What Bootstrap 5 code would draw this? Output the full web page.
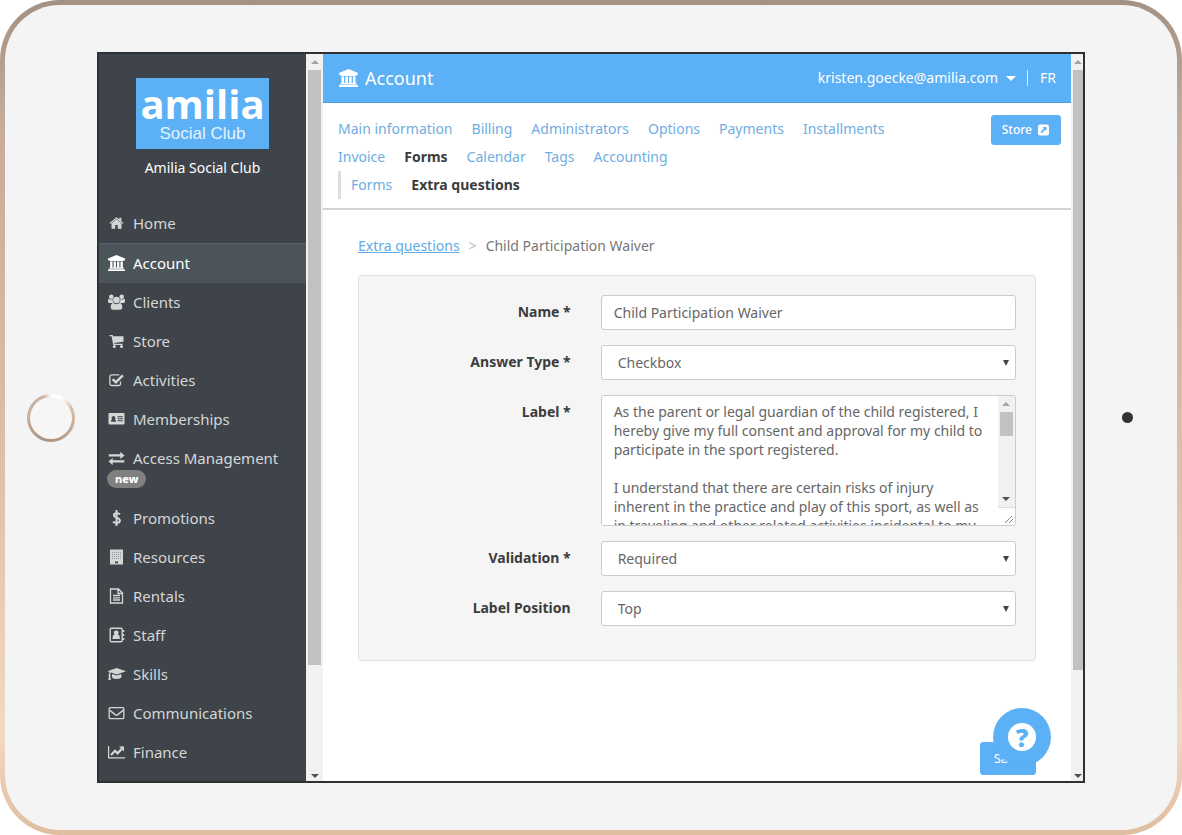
<!DOCTYPE html>
<html lang="en">
<head>
<meta charset="utf-8">
<meta name="viewport" content="width=device-width, initial-scale=1">
<title>Account - Extra questions</title>
<link href="https://cdn.jsdelivr.net/npm/bootstrap@5.3.0/dist/css/bootstrap.min.css" rel="stylesheet">
<style>
:root{--brand:#5cb0f5;--side:#3e444a;--ink:#3c3c3c}
body{font-family:"Noto Sans",sans-serif;font-size:14px;line-height:20px;color:#666;background:#fff}
.tablet{min-height:600px;border:5px solid transparent;border-radius:60px;
  background:linear-gradient(#f4f4f4,#f4f4f4) padding-box,linear-gradient(180deg,#a39183,#c6ad9a 15%,#dcc0a8 55%,#f1d9c2 88%,#dfbd9f) border-box;padding:47px 0}
.bezel{flex:0 0 92px}
.home-ring{width:48px;height:48px;border-radius:50%;border:3px solid transparent;
  background:linear-gradient(#f6f6f6,#f6f6f6) padding-box,conic-gradient(#fff 0,#fff 8%,#d8bda6 18%,#b39a86 45%,#a8917f 55%,#c9ae98 75%,#cdb5a3 95%,#fff) border-box}
.camera{width:11px;height:11px;border-radius:50%;background:#333}
.screen{border:2px solid #2e3133;background:#fff;min-width:0}
.sidebar{flex:0 0 207px;background:var(--side)}
.club-logo{width:133px;height:71px;background:var(--brand);color:#fff;text-decoration:none}
.club-logo strong{font-family:"Open Sans",sans-serif;font-weight:700;font-size:40px;line-height:52px}
.club-logo span{font-family:"Liberation Sans",sans-serif;font-size:17px;line-height:20px;color:#e4f3ff;margin-top:-6px}
.club-name{margin:9px 0 26px}
.side-nav .nav-link{font-size:15px;line-height:20px;color:#d6d6d6;padding:9px 8px 10px;display:flex;flex-wrap:wrap;align-items:center;column-gap:7px}
.side-nav .nav-link.active{color:#fff;background:#4b5459;border-top:1px solid #56606c}
.side-nav .ico{width:19px;height:18px;fill:currentColor}
.ico{flex:none}
.tag-new{background:#808080;font-size:11px;line-height:18px;padding:0 8px;font-weight:800}
.side-nav .has-tag{row-gap:2px;padding-bottom:11px}
.bar-track{flex:none;width:17px;background:#f1f1f1;padding:0 2px;overflow:hidden}
.bar-edge{width:12px;padding-right:0}
.bar-track i{flex:none;display:block;height:16px}
.bar-track i::after{content:"";display:block;margin:6px auto 0;width:0;border:4px solid transparent;border-top-width:0;border-bottom-color:#a3a3a3}
.bar-track i.down::after{border-top:4px solid #505050;border-bottom:0}
.screen > .bar-track i.down{height:13px}
.bar-track b{display:block;background:#c1c1c1}
.bar-track .grow-thumb{flex:0 1 595px}
.bar-edge .grow-thumb{flex-basis:600px}
.main-pane{min-width:0}
.top-bar{background:var(--brand);border-bottom:1px solid #4e9fe2;padding:0 15px;height:49px;color:#fff}
.top-bar h1{font-size:18px;line-height:24px;font-weight:400;margin:0;column-gap:6px}
.top-bar .user-menu{color:#fff;background:none;border:0;padding:0;font-size:14px}
.user-menu::after{margin-left:8px;vertical-align:2px;border-width:5px;border-bottom-width:0}
.lang{color:#fff;text-decoration:none;border-left:1px solid #d9edfd;margin-left:11px;padding-left:12px;line-height:16px}
.tab-zone{padding:12px 10px 9px 15px;border-bottom:2px solid #d3d3d3}
.tabs{column-gap:19px}
.tabs .nav-link{padding:4px 0;color:#6fade2}
.tabs .nav-link.active{font-weight:700;color:var(--ink)}
.sub-tabs{border-left:3px solid #ddd;padding-left:10px}
.btn-brand{--bs-btn-color:#fff;--bs-btn-bg:#5cb0f5;--bs-btn-border-color:#5cb0f5;--bs-btn-hover-color:#fff;--bs-btn-hover-bg:#4aa0e8;--bs-btn-border-radius:3px}
.btn-store{font-size:12px;line-height:18px;font-weight:500;padding:5px 10px;column-gap:5px}
.work{padding:26px 35px 0}
.crumbs{--bs-breadcrumb-divider:">";--bs-breadcrumb-divider-color:#bbb;--bs-breadcrumb-item-active-color:#777;--bs-breadcrumb-item-padding-x:9px;margin-bottom:19px}
.crumbs a{color:#62aae6}
.form-panel{background:#f5f5f5;border:1px solid #e3e3e3;border-radius:3px;padding:19px 19px 34px}
.form-panel .row{--bs-gutter-x:30px;margin-bottom:15px}
.form-panel .row:last-child{margin-bottom:0}
.form-panel label{font-weight:700;color:var(--ink);padding-top:7px;padding-bottom:0}
.form-control,.form-select{font-size:14px;line-height:19px;color:#666;border-color:#ccc;border-radius:3px;height:35px;padding:7px 12px}
.form-select{padding-left:16px;background-size:6px 6px;background-position:right 6px center;
  background-image:url("data:image/svg+xml,%3Csvg xmlns='http://www.w3.org/2000/svg' viewBox='0 0 6 6'%3E%3Cpath fill='%23444' d='M0 0h6L3 6z'/%3E%3C/svg%3E")}
.memo{height:131px;padding:0;overflow:hidden;background:#fff}
.memo textarea{border:0;resize:none;overflow:hidden;outline:0;padding:6px 12px 0;color:inherit;min-width:0;height:129px}
.memo .thumb-small{flex:0 0 24px}
.grip{flex:none;height:18px;background:#fff;border-top:1px solid #ddd;margin:0 -2px}
.btn-save{font-size:13px;line-height:19px;padding:6px 13px;margin-top:81px}
.help{right:20px;bottom:15px;width:58px;height:58px;background:var(--brand);border:0;padding:0}
.help span{width:28px;height:28px;background:#fff;color:var(--brand);font:800 25px/28px "Open Sans",sans-serif}
</style>
</head>
<body>
<svg class="d-none" aria-hidden="true">
  <symbol id="bank" viewBox="0 0 20 18"><path d="M10 .5 1 4.300V6h1.400v1h15.200V6H19V4.300zM3.300 7.500v6.300h-.8v1.200h15v-1.200h-.8V7.500h-2.500v6.300h-1.200V7.500h-2.400v6.300H9.400V7.500H7v6.300H5.800V7.500zM1.500 15.500v.6H1v1.400h18v-1.400h-.5v-.6z"/></symbol>
</svg>

<div class="tablet vh-100 d-flex align-items-stretch">
  <div class="bezel d-flex align-items-center justify-content-center"><div class="home-ring"></div></div>

  <div class="screen flex-grow-1 d-flex overflow-hidden">
    <aside class="sidebar overflow-hidden">
      <div class="d-flex flex-column align-items-center text-white pt-4">
        <a href="#" class="club-logo d-flex flex-column align-items-center"><strong>amilia</strong><span>Social Club</span></a>
        <div class="club-name">Amilia Social Club</div>
      </div>
      <nav class="side-nav nav flex-column">
        <a class="nav-link" href="#"><svg class="ico" viewBox="0 0 19 18"><path d="m9.500 5.200 5 4.300v5.300h-3.700v-3.700H8.200v3.700H4.500V9.500z"/><path d="m2.600 9.100 6.900-5.900 2.800 2.400V3.800h2v3.500l2.100 1.800-.8.900-6.100-5.200-6.100 5.200z"/></svg>Home</a>
        <a class="nav-link active" href="#"><svg class="ico"><use href="#bank"/></svg>Account</a>
        <a class="nav-link" href="#"><svg class="ico" viewBox="0 0 19 18"><circle cx="4.300" cy="3.700" r="2.300"/><circle cx="14.700" cy="3.700" r="2.300"/><path d="M1 7.300c0-1.400 1-2 1.600-1.400 1 .8 2.300.8 3.300.2-.6 1.800 0 3 .7 3.800H2.700C1.600 9.900 1 9.300 1 8.400zM18 7.300c0-1.400-1-2-1.600-1.400-1 .8-2.300.8-3.300.2.600 1.800 0 3-.7 3.800h3.900c1.100 0 1.700-.6 1.700-1.500z"/><circle cx="9.500" cy="7" r="3.300"/><path d="M3.700 14.300c0-2.500.9-4.200 2.700-4.200 1.800 1.500 4.400 1.500 6.200 0 1.800 0 2.700 1.700 2.700 4.200 0 1.700-1 2.500-2.400 2.500H6.100c-1.400 0-2.400-.8-2.400-2.500z"/></svg>Clients</a>
        <a class="nav-link" href="#"><svg class="ico" viewBox="0 0 19 18"><path d="M2.500 3h3.200l.4 1.300h10.400v5.500L7.200 10.900l.2.800h8.100V13H6.200L4.600 4.300H2.500z"/><circle cx="7.300" cy="14.600" r="1.500"/><circle cx="14.500" cy="14.600" r="1.500"/></svg>Store</a>
        <a class="nav-link" href="#"><svg class="ico" viewBox="0 0 19 18"><path d="M13.500 10.500v2.300c0 .9-.7 1.700-1.600 1.700H4.600c-.9 0-1.700-.8-1.700-1.700V5.600c0-1 .8-1.700 1.700-1.700h7.600" fill="none" stroke="currentColor" stroke-width="1.300"/><path d="m5.700 8.200 3.100 3.100 7-7" fill="none" stroke="currentColor" stroke-width="2.500"/></svg>Activities</a>
        <a class="nav-link" href="#"><svg class="ico" viewBox="0 0 19 18"><path fill-rule="evenodd" d="M2.500 3h14c.6 0 1 .4 1 1v9.500c0 .6-.4 1-1 1h-14c-.6 0-1-.4-1-1V4c0-.6.400-1 1-1zM4 11.800h5c0-1.700-.6-2.400-1.200-2.400a1.900 1.900 0 1 0-2.600 0C4.500 9.400 4 10.100 4 11.800zM10.500 6.300v1h5.300v-1zm0 2v1h5.300v-1zm0 2v1h5.300v-1z"/></svg>Memberships</a>
        <a class="nav-link has-tag" href="#"><svg class="ico" viewBox="0 0 19 18"><path d="M1.700 5.300h11.600V2.800l4.200 3.600-4.200 3.500V7.500H1.700zM17.300 11.300H5.700V8.900l-4.200 3.500 4.200 3.500v-2.400h11.600z"/></svg>Access Management <span class="badge rounded-pill tag-new ms-0">new</span></a>
        <a class="nav-link" href="#"><svg class="ico" viewBox="0 0 19 18"><path d="M13 5.300C11.500 4.100 7 3.400 6.900 6.100c-.1 3 6 2 6 5.400 0 3.100-4.700 2.900-6.900 1.200M9.500 1v16" fill="none" stroke="currentColor" stroke-width="2"/></svg>Promotions</a>
        <a class="nav-link" href="#"><svg class="ico" viewBox="0 0 19 18"><path d="M3 1.500h13v15H3z"/><path d="M5 4.500h9M5 6.500h9M5 8.500h9M5 10.500h9" stroke="#85898c" stroke-width=".8" stroke-dasharray="1 1"/><path d="M8 13.500h3v1.800H8z" fill="#3e444a"/></svg>Resources</a>
        <a class="nav-link" href="#"><svg class="ico" viewBox="0 0 19 18"><path d="M3.500 2h8l4 4v10h-12zM11 2v4.500h4.500M6 8.500h7M6 10.800h7M6 13h7" fill="none" stroke="currentColor" stroke-width="1.300"/></svg>Rentals</a>
        <a class="nav-link" href="#"><svg class="ico" viewBox="0 0 19 18"><rect x="3.200" y="2.200" width="12" height="13.600" rx="1.200" fill="none" stroke="currentColor" stroke-width="1.400"/><circle cx="9.200" cy="6.800" r="2.400"/><path d="M5.500 13c0-3 .7-4.300 2.200-4.500h3c1.500.2 2.200 1.500 2.200 4.500zM16 4h1.300v2H16zM16 8h1.300v2H16zM16 12h1.300v2H16z"/></svg>Staff</a>
        <a class="nav-link" href="#"><svg class="ico" viewBox="0 0 19 18"><path d="m9.700 3 9.300 3.200-9.300 3.200-5.500-1.900c-.8.500-1 1.500-1 2.600.7.500.6 1 .1 1.400l.5 3.500H1.300l.6-3.500c-.5-.4-.5-1 0-1.400 0-1.300.2-2.300.9-3L.4 6.200z"/><path d="m5 9 4.700 1.600L14.400 9v3c0 2.600-9.400 2.600-9.400 0z"/></svg>Skills</a>
        <a class="nav-link" href="#"><svg class="ico" viewBox="0 0 19 18"><rect x="2.200" y="3.700" width="14.600" height="11" rx="1" fill="none" stroke="currentColor" stroke-width="1.300"/><path d="m2.500 6 5.600 4.600c.9.700 1.900.7 2.800 0L16.500 6" fill="none" stroke="currentColor" stroke-width="1.400"/></svg>Communications</a>
        <a class="nav-link" href="#"><svg class="ico" viewBox="0 0 19 18"><path d="M1.600 3v11.900h16.500" fill="none" stroke="currentColor" stroke-width="1.200"/><path d="m4 12 4-4.200 2.500 2.500 4.500-4.600" fill="none" stroke="currentColor" stroke-width="2.300"/><path d="M12 3.500h5v5z"/></svg>Finance</a>
      </nav>
    </aside>
    <div class="bar-track d-flex flex-column" aria-hidden="true"><i></i><b class="grow-thumb"></b><i class="down mt-auto"></i></div>

    <main class="main-pane flex-grow-1 position-relative overflow-hidden">
      <header class="top-bar d-flex align-items-center">
        <h1 class="d-flex align-items-center me-auto"><svg class="ico" width="21" height="20" fill="#fff"><use href="#bank"/></svg>Account</h1>
        <button type="button" class="user-menu dropdown-toggle">kristen.goecke@amilia.com</button>
        <a class="lang" href="#">FR</a>
      </header>
      <section class="tab-zone">
        <div class="d-flex align-items-start">
          <nav class="nav tabs flex-grow-1">
            <a class="nav-link" href="#">Main information</a><a class="nav-link" href="#">Billing</a><a class="nav-link" href="#">Administrators</a><a class="nav-link" href="#">Options</a><a class="nav-link" href="#">Payments</a><a class="nav-link" href="#">Installments</a><a class="nav-link" href="#">Invoice</a><a class="nav-link active" href="#">Forms</a><a class="nav-link" href="#">Calendar</a><a class="nav-link" href="#">Tags</a><a class="nav-link" href="#">Accounting</a>
          </nav>
          <button type="button" class="btn btn-brand btn-store d-flex align-items-center flex-shrink-0 ms-5">Store<svg class="ico" width="13" height="12" viewBox="0 0 13 12"><rect x="1" y=".5" width="11" height="11" rx="2" fill="#fff"/><path d="M5.500 3h4v4L8.200 5.700 4.700 9.200 3.500 8l3.400-3.500z" fill="#5cb0f5"/></svg></button>
        </div>
        <nav class="nav tabs sub-tabs"><a class="nav-link" href="#">Forms</a><a class="nav-link active" href="#">Extra questions</a></nav>
      </section>

      <section class="work">
        <ol class="breadcrumb crumbs">
          <li class="breadcrumb-item"><a href="#">Extra questions</a></li>
          <li class="breadcrumb-item active">Child Participation Waiver</li>
        </ol>
        <form>
          <div class="form-panel">
            <div class="row"><label class="col-4 text-end" for="name">Name *</label><div class="col-8"><input id="name" class="form-control" value="Child Participation Waiver"></div></div>
            <div class="row"><label class="col-4 text-end" for="type">Answer Type *</label><div class="col-8"><select id="type" class="form-select"><option>Checkbox</option></select></div></div>
            <div class="row"><label class="col-4 text-end" for="text">Label *</label><div class="col-8">
              <div class="form-control memo d-flex">
                <textarea id="text" class="flex-grow-1">As the parent or legal guardian of the child registered, I hereby give my full consent and approval for my child to participate in the sport registered.

I understand that there are certain risks of injury inherent in the practice and play of this sport, as well as in traveling and other related activities incidental to my</textarea>
                <div class="bar-track d-flex flex-column" aria-hidden="true"><i></i><b class="thumb-small"></b><i class="down mt-auto"></i>
                  <div class="grip d-flex justify-content-end align-items-end"><svg width="12" height="12" viewBox="0 0 12 12"><path d="m2 10 7-7M6 10l4-4" stroke="#888" fill="none"/></svg></div></div>
              </div></div></div>
            <div class="row"><label class="col-4 text-end" for="valid">Validation *</label><div class="col-8"><select id="valid" class="form-select"><option>Required</option></select></div></div>
            <div class="row"><label class="col-4 text-end" for="pos">Label Position</label><div class="col-8"><select id="pos" class="form-select"><option>Top</option></select></div></div>
          </div>
          <div class="d-flex justify-content-end"><button type="submit" class="btn btn-brand btn-save">Save</button></div>
        </form>
      </section>
      <button type="button" class="help position-absolute rounded-circle d-flex align-items-center justify-content-center" aria-label="Help"><span class="rounded-circle">?</span></button>
    </main>
    <div class="bar-track bar-edge d-flex flex-column" aria-hidden="true"><i></i><b class="grow-thumb"></b><i class="down mt-auto"></i></div>
  </div>

  <div class="bezel d-flex align-items-center justify-content-center pe-2"><div class="camera"></div></div>
</div>
<script src="https://cdn.jsdelivr.net/npm/bootstrap@5.3.0/dist/js/bootstrap.bundle.min.js"></script>
</body>
</html>
